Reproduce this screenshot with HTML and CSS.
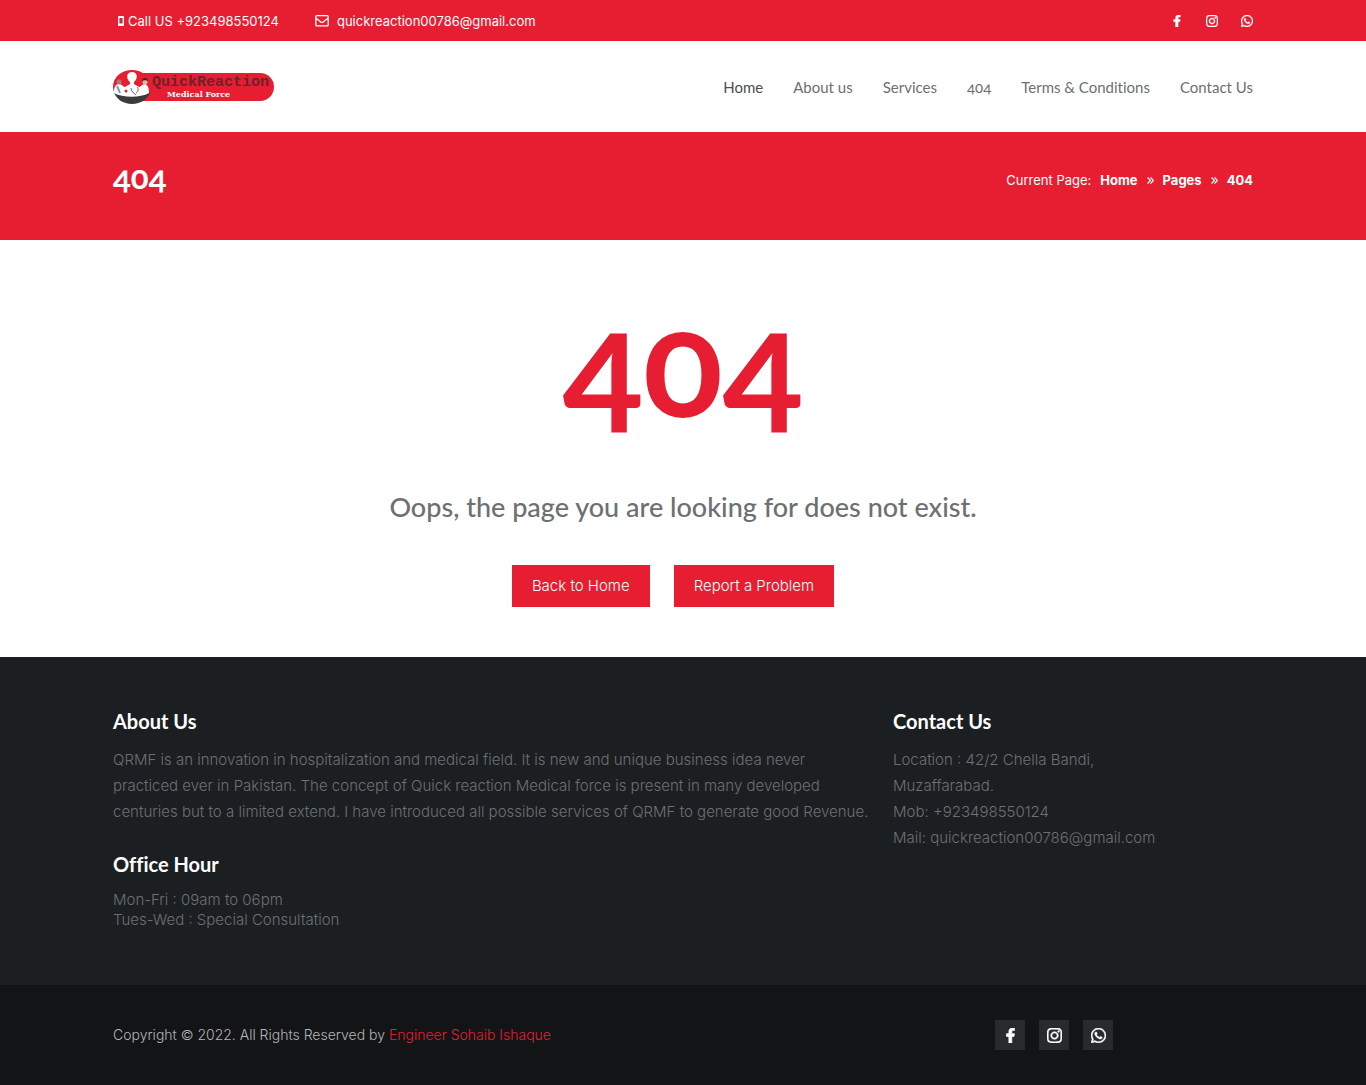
FILE: index.html
```html
<!DOCTYPE html>
<html lang="en">
<head>
<meta charset="utf-8">
<meta name="viewport" content="width=device-width, initial-scale=1">
<title>404 - Quick Reaction Medical Force</title>
<link rel="stylesheet" href="styles.css">
</head>
<body>
<svg class="sprite" aria-hidden="true">
  <symbol id="facebook" viewBox="-96 0 512 512"><path stroke="currentColor" stroke-width="24" d="M279.14 288l14.22-92.66h-88.91v-60.13c0-25.35 12.42-50.06 52.24-50.06h40.42V6.26S260.43 0 225.36 0c-73.22 0-121.08 44.38-121.08 124.72v70.62H22.89V288h81.39v224h100.17V288z"/></symbol>
  <symbol id="instagram" viewBox="0 32 448 448"><path stroke="currentColor" stroke-width="14" d="M224.1 141c-63.6 0-114.9 51.3-114.9 114.9s51.3 114.9 114.9 114.9S339 319.5 339 255.9 287.7 141 224.1 141zm0 189.6c-41.1 0-74.7-33.5-74.7-74.7s33.5-74.7 74.7-74.7 74.7 33.5 74.7 74.7-33.6 74.7-74.7 74.7zm146.4-194.3c0 14.9-12 26.8-26.8 26.8-14.9 0-26.8-12-26.8-26.8s12-26.8 26.8-26.8 26.8 12 26.8 26.8zm76.1 27.2c-1.7-35.9-9.9-67.7-36.2-93.9-26.2-26.2-58-34.4-93.9-36.2-37-2.1-147.9-2.1-184.9 0-35.8 1.7-67.6 9.9-93.9 36.1s-34.4 58-36.2 93.9c-2.1 37-2.1 147.9 0 184.9 1.7 35.9 9.9 67.7 36.2 93.9s58 34.4 93.9 36.2c37 2.1 147.9 2.1 184.9 0 35.9-1.7 67.7-9.9 93.9-36.2 26.2-26.2 34.4-58 36.2-93.9 2.1-37 2.1-147.8 0-184.8zM398.8 388c-7.8 19.6-22.9 34.7-42.6 42.6-29.5 11.7-99.5 9-132.1 9s-102.7 2.6-132.1-9c-19.6-7.8-34.7-22.9-42.6-42.6-11.7-29.5-9-99.5-9-132.1s-2.6-102.7 9-132.1c7.8-19.6 22.9-34.7 42.6-42.6 29.5-11.7 99.5-9 132.1-9s102.7-2.6 132.1 9c19.6 7.8 34.7 22.9 42.6 42.6 11.7 29.5 9 99.5 9 132.1s2.7 102.7-9 132.1z"/></symbol>
  <symbol id="whatsapp" viewBox="0 32 448 448"><path stroke="currentColor" stroke-width="14" d="M380.9 97.1C339 55.1 283.2 32 223.9 32c-122.4 0-222 99.6-222 222 0 39.1 10.2 77.3 29.6 111L0 480l117.7-30.9c32.4 17.7 68.9 27 106.1 27h.1c122.3 0 224.1-99.6 224.1-222 0-59.3-25.2-115-67.1-157zm-157 341.6c-33.2 0-65.7-8.9-94-25.7l-6.7-4-69.8 18.3L72 359.2l-4.4-7c-18.5-29.4-28.2-63.3-28.2-98.2 0-101.7 82.8-184.5 184.6-184.5 49.3 0 95.6 19.2 130.4 54.1 34.8 34.9 56.2 81.2 56.1 130.5 0 101.8-84.9 184.6-186.6 184.6zm101.2-138.2c-5.5-2.8-32.8-16.2-37.9-18-5.1-1.9-8.8-2.8-12.5 2.8-3.7 5.6-14.3 18-17.6 21.8-3.2 3.7-6.5 4.2-12 1.4-32.6-16.3-54-29.1-75.5-66-5.7-9.8 5.7-9.1 16.3-30.3 1.8-3.7.9-6.9-.5-9.7-1.4-2.8-12.5-30.1-17.1-41.2-4.5-10.8-9.1-9.3-12.5-9.5-3.2-.2-6.9-.2-10.6-.2-3.7 0-9.7 1.4-14.8 6.9-5.1 5.6-19.4 19-19.4 46.3 0 27.3 19.9 53.7 22.6 57.4 2.8 3.7 39.1 59.7 94.8 83.8 35.2 15.2 49 16.5 66.6 13.9 10.7-1.6 32.8-13.4 37.4-26.4 4.6-13 4.6-24.1 3.2-26.4-1.3-2.5-5-3.9-10.5-6.6z"/></symbol>
  <symbol id="chevrons" viewBox="0 0 7 7"><path d="M.5.5l3 3-3 3M3.5.5l3 3-3 3" fill="none" stroke="currentColor" stroke-width="1.2"/></symbol>
</svg>

<div class="topbar">
  <div class="container topbar-row">
    <div class="topbar-info">
      <span class="info-item phone">
        <svg width="6" height="10" viewBox="0 0 6 10" aria-hidden="true"><path fill-rule="evenodd" d="M1 0h4a1 1 0 0 1 1 1v8a1 1 0 0 1-1 1H1a1 1 0 0 1-1-1V1a1 1 0 0 1 1-1zm.4 2v5.6h3.2V2z"/></svg>
        Call US +923498550124
      </span>
      <span class="info-item mail">
        <svg width="14" height="12" viewBox="0 0 14 12" aria-hidden="true"><path d="M1.8.7h10.4q1 0 1 1v8.2q0 1-1 1H1.8q-1 0-1-1V1.700q0-1 1-1zM.8 3l5 3.900q1.200.9 2.400 0l5-3.900" fill="none" stroke="currentColor" stroke-width="1.300"/></svg>
        quickreaction00786@gmail.com
      </span>
    </div>
    <div class="topbar-social">
      <a href="#" aria-label="Facebook"><svg class="icon-small"><use href="#facebook"/></svg></a>
      <a href="#" aria-label="Instagram"><svg class="icon-small"><use href="#instagram"/></svg></a>
      <a href="#" aria-label="WhatsApp"><svg class="icon-small"><use href="#whatsapp"/></svg></a>
    </div>
  </div>
</div>

<header class="container header">
  <a href="#" class="logo" aria-label="Quick Reaction Medical Force">
    <svg width="162" height="36" viewBox="0 0 162 36">
      <rect x="8" y="4" width="153" height="28" rx="14" fill="#e71e31"/>
      <ellipse cx="19" cy="17.500" rx="19" ry="16.500" fill="#e71e31"/>
      <path d="M1 23h36c-2 7-9 12-18 12S3 30 1 23z" fill="#3b3b3d"/>
      <path d="M1 24c0-5 1-9 5-9 3 0 4 3 6 3l5-3v-2c-4-3-4-10 2-10s6 7 2 10v2l5 3c2 0 3-3 6-3 3 1 4 4 4 9-9 5-26 5-35 0z" fill="#fff"/>
      <circle cx="6" cy="13" r="2.500" fill="#a47c6f"/><circle cx="32" cy="13" r="2.500" fill="#e7b79b"/>
      <path d="M29 12c0-4 6-4 6 0-2-1-4-1-6 0z" fill="#2f2f31"/>
      <path d="M4 17l3 7" fill="none" stroke="#6fa3c4" stroke-width="2"/>
      <path d="M18 19c0 4 3 5 5 7M24 18c2 2 1 5-1 6" fill="none" stroke="#5b6678" stroke-width="1"/>
      <circle cx="13" cy="22" r="1.500" fill="#e71e31"/>
      <text x="39" y="17" class="logo-name">QuickReaction</text>
      <text x="54" y="28" class="logo-tag">Medical Force</text>
    </svg>
  </a>
  <nav class="nav">
    <a href="#" class="active">Home</a>
    <a href="#">About us</a>
    <a href="#">Services</a>
    <a href="#">404</a>
    <a href="#">Terms &amp; Conditions</a>
    <a href="#">Contact Us</a>
  </nav>
</header>

<div class="page-title">
  <div class="container page-title-row">
    <h1>404</h1>
    <div class="breadcrumb">
      <span>Current Page:</span>
      <a href="#">Home</a>
      <svg width="7" height="7"><use href="#chevrons"/></svg>
      <a href="#">Pages</a>
      <svg width="7" height="7"><use href="#chevrons"/></svg>
      <a href="#">404</a>
    </div>
  </div>
</div>

<main class="container error">
  <div class="error-code">404</div>
  <h2>Oops, the page you are looking for does not exist.</h2>
  <div class="actions">
    <a href="#" class="btn">Back to Home</a>
    <a href="#" class="btn">Report a Problem</a>
  </div>
</main>

<footer>
  <div class="footer-main">
    <div class="container footer-grid">
      <div>
        <h3>About Us</h3>
        <p>QRMF is an innovation in hospitalization and medical field. It is new and unique business idea never<br>practiced ever in Pakistan. The concept of Quick reaction Medical force is present in many developed<br>centuries but to a limited extend. I have introduced all possible services of QRMF to generate good Revenue.</p>
        <h3 class="hours-title">Office Hour</h3>
        <p class="hours">Mon-Fri : 09am to 06pm<br>Tues-Wed : Special Consultation</p>
      </div>
      <div>
        <h3>Contact Us</h3>
        <p>Location : 42/2 Chella Bandi,<br>Muzaffarabad.<br>Mob: +923498550124<br>Mail: quickreaction00786@gmail.com</p>
      </div>
    </div>
  </div>
  <div class="footer-bottom">
    <div class="container footer-bottom-row">
      <p>Copyright © 2022. All Rights Reserved by <a href="#">Engineer Sohaib Ishaque</a></p>
      <div class="footer-social">
        <a href="#" aria-label="Facebook"><svg class="icon"><use href="#facebook"/></svg></a>
        <a href="#" aria-label="Instagram"><svg class="icon"><use href="#instagram"/></svg></a>
        <a href="#" aria-label="WhatsApp"><svg class="icon"><use href="#whatsapp"/></svg></a>
      </div>
    </div>
  </div>
</footer>
</body>
</html>
```
FILE: styles.css
```css
* { box-sizing: border-box; }

body {
  margin: 0;
  background: #fff;
  color: #6d7072;
  font: 300 15px/26px Inter, "Open Sans", sans-serif;
}

h1, h2, h3, p { margin: 0; }
a { color: inherit; text-decoration: none; }
svg { fill: currentColor; flex: none; }

h1, h2, h3, .nav, .error-code {
  font-family: Lato, "Open Sans", sans-serif;
  font-variant-numeric: oldstyle-nums;
  font-variant-ligatures: none;
}

.sprite { position: absolute; width: 0; height: 0; }

.container {
  width: 100%;
  max-width: 1170px;
  margin: 0 auto;
  padding: 0 15px;
}

.topbar { background: #e71e31; color: #fff; font-size: 13px; font-weight: 400; }
.topbar-row { display: flex; justify-content: space-between; align-items: center; min-height: 41px; }
.topbar-info { display: flex; gap: 36px; padding-left: 5px; }
.info-item { display: flex; align-items: center; gap: 8px; }
.phone { gap: 4px; }
.topbar-social { display: flex; gap: 23px; }
.topbar-social a { display: flex; }
.icon-small { width: 12px; height: 12px; overflow: visible; }
.icon { width: 15px; height: 15px; overflow: visible; }

.header { display: flex; justify-content: space-between; align-items: center; min-height: 91px; }
.logo { display: flex; }
.logo-name { font: 700 15px "Liberation Mono", monospace; fill: #6b2229; }
.logo-tag { font: 700 8px "DejaVu Serif", serif; fill: #fff; }
.nav { display: flex; gap: 30px; font-size: 15px; font-weight: 400; }
.nav .active { color: #4b4f51; }

.page-title { background: #e71e31; color: #fff; min-height: 108px; padding-top: 28px; }
.page-title-row { display: flex; justify-content: space-between; align-items: center; }
h1 { padding-bottom: 8px; font-size: 33px; line-height: 32px; font-weight: 700; }
.breadcrumb { display: flex; align-items: center; gap: 9px; font-size: 13px; font-weight: 400; }
.breadcrumb a { font-weight: 700; }

.error { padding-top: 40px; padding-bottom: 50px; text-align: center; }
.error-code { color: #e71e31; font-size: 148px; line-height: 160px; font-weight: 700; }
h2 { margin-top: 50px; font-size: 27px; line-height: 34px; font-weight: 500; }
.actions { display: flex; justify-content: center; gap: 24px; margin-top: 41px; padding-right: 20px; }
.btn { padding: 8px 20px; background: #e71e31; color: #fff; }

.footer-main { background: #1b1f21; padding: 50px 0; min-height: 328px; }
.footer-grid { display: grid; grid-template-columns: 760px 1fr; gap: 20px; }
h3 { margin-bottom: 12px; color: #fff; font-size: 20px; line-height: 28px; font-weight: 700; }
.hours-title { margin-top: 25px; }
.hours { line-height: 20px; }
.footer-bottom { background: #121415; }
.footer-bottom-row { display: flex; justify-content: space-between; align-items: center; min-height: 100px; color: #b4b6b7; font-size: 14px; }
.footer-bottom p a { color: #e71e31; }
.footer-social { display: flex; gap: 14px; margin-right: 140px; color: #fff; }
.footer-social a { display: grid; place-items: center; width: 30px; height: 30px; background: #272b2e; }
```
